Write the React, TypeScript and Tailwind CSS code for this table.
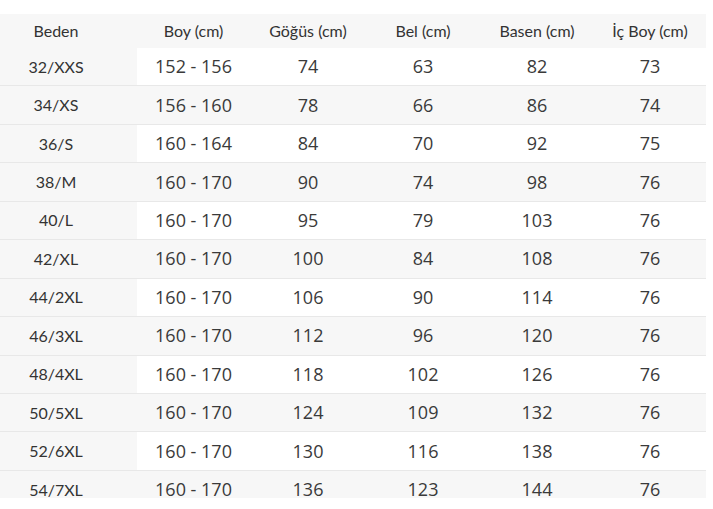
const headers = ["Boy (cm)", "Göğüs (cm)", "Bel (cm)", "Basen (cm)", "İç Boy (cm)"];

const rows: [string, string, string, string, string, string][] = [
  ["32/XXS", "152 - 156", "74", "63", "82", "73"],
  ["34/XS", "156 - 160", "78", "66", "86", "74"],
  ["36/S", "160 - 164", "84", "70", "92", "75"],
  ["38/M", "160 - 170", "90", "74", "98", "76"],
  ["40/L", "160 - 170", "95", "79", "103", "76"],
  ["42/XL", "160 - 170", "100", "84", "108", "76"],
  ["44/2XL", "160 - 170", "106", "90", "114", "76"],
  ["46/3XL", "160 - 170", "112", "96", "120", "76"],
  ["48/4XL", "160 - 170", "118", "102", "126", "76"],
  ["50/5XL", "160 - 170", "124", "109", "132", "76"],
  ["52/6XL", "160 - 170", "130", "116", "138", "76"],
  ["54/7XL", "160 - 170", "136", "123", "144", "76"],
];

const cols = "grid grid-cols-[137px_113px_116px_114px_114px_112px]";

export default function App() {
  return (
    <div className="h-[509px] w-[713px] bg-white pt-[14px] text-[#333]">
      <div className="h-[484px] w-[706px] overflow-hidden">
        <div className={`${cols} h-[34px] items-center bg-[#f7f7f7] font-['Lato',sans-serif] text-[16px]`}>
          <div className="pr-[25px] text-center">Beden</div>
          {headers.map((h) => (
            <div key={h} className="text-center">
              {h}
            </div>
          ))}
        </div>

        {rows.map((r, i) => (
          <div
            key={r[0]}
            className={`${cols} h-[38.45px] border-b border-[#e8e8e8] ${i % 2 === 1 ? "bg-[#f7f7f7]" : "bg-white"}`}
          >
            <div className="flex items-center justify-center bg-[#f7f7f7] pr-[25px] font-['Lato',sans-serif] text-[16px]">
              {r[0]}
            </div>
            {r.slice(1).map((v, j) => (
              <div
                key={j}
                className="flex items-center justify-center font-['Open_Sans',sans-serif] text-[18px] text-[#3a3a3a]"
              >
                {v}
              </div>
            ))}
          </div>
        ))}
      </div>
    </div>
  );
}
